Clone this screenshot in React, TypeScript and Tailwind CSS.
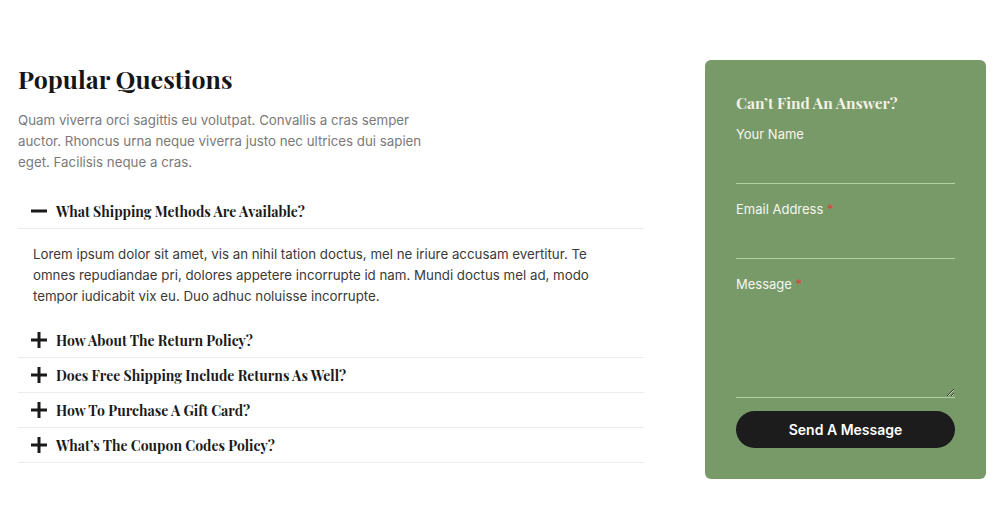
import { useState } from "react";

const serif = "font-['Playfair_Display','DejaVu_Serif',serif]";
const sans = "font-['Inter','Liberation_Sans',sans-serif]";

const faqs = [
  {
    q: "What Shipping Methods Are Available?",
    a: "Lorem ipsum dolor sit amet, vis an nihil tation doctus, mel ne iriure accusam evertitur. Te omnes repudiandae pri, dolores appetere incorrupte id nam. Mundi doctus mel ad, modo tempor iudicabit vix eu. Duo adhuc noluisse incorrupte.",
  },
  { q: "How About The Return Policy?", a: "" },
  { q: "Does Free Shipping Include Returns As Well?", a: "" },
  { q: "How To Purchase A Gift Card?", a: "" },
  { q: "What\u2019s The Coupon Codes Policy?", a: "" },
];

const Icon = ({ open }: { open: boolean }) => (
  <svg width="16" height="16" viewBox="0 0 16 16" className="shrink-0">
    <rect x="0" y="6.5" width="16" height="3" fill="#1a1a1a" />
    {!open && <rect x="6.5" y="0" width="3" height="16" fill="#1a1a1a" />}
  </svg>
);

export default function App() {
  const [open, setOpen] = useState(0);

  return (
    <div className={`flex min-h-[527px] bg-white pl-[18px] pr-[14px] pt-[60px] ${sans}`}>
      <div className="w-[626px]">
        <h2 className={`${serif} mt-[1px] text-[25px] leading-[36px] font-bold text-[#161616]`}>
          Popular Questions
        </h2>
        <p className="mt-[13px] w-[410px] text-[13.3px] leading-[21px] text-[#7a7a7a]">
          Quam viverra orci sagittis eu volutpat. Convallis a cras semper
          auctor. Rhoncus urna neque viverra justo nec ultrices dui sapien
          eget. Facilisis neque a cras.
        </p>

        <div className="mt-[21px]">
          {faqs.map((f, i) => (
            <div key={f.q}>
              <button
                onClick={() => setOpen(open === i ? -1 : i)}
                className="flex h-[35px] w-full items-center gap-[9px] border-b border-[#ececec] pl-[13px] text-left"
              >
                <Icon open={open === i} />
                <span className={`${serif} text-[14px] font-bold text-[#1a1a1a]`}>
                  {f.q}
                </span>
              </button>
              {open === i && f.a && (
                <p className="px-[15px] pt-[15px] pb-[16px] pr-[40px] text-[13.3px] leading-[21px] text-[#3a3a3a]">
                  {f.a}
                </p>
              )}
            </div>
          ))}
        </div>
      </div>

      <div className="ml-auto h-[419px] w-[281px] rounded-[6px] bg-[#789a69] px-[31px] pt-[33px]">
        <h3 className={`${serif} text-[15.5px] leading-[20px] font-bold text-[#f5f1e3]`}>
          Can{"\u2019"}t Find An Answer?
        </h3>

        <label className="mt-[12px] block text-[13px] leading-[18px] text-[#f7f5ec]">
          Your Name
        </label>
        <input
          type="text"
          className="block h-[41px] w-full border-b border-[#b5cfa6] bg-transparent outline-none"
        />

        <label className="mt-[16px] block text-[13px] leading-[18px] text-[#f7f5ec]">
          Email Address <span className="text-[#e0413a]">*</span>
        </label>
        <input
          type="email"
          className="block h-[41px] w-full border-b border-[#b5cfa6] bg-transparent outline-none"
        />

        <label className="mt-[16px] block text-[13px] leading-[18px] text-[#f7f5ec]">
          Message <span className="text-[#e0413a]">*</span>
        </label>
        <textarea className="block h-[105px] w-full border-b border-[#b5cfa6] bg-transparent outline-none" />

        <button className="mt-[13px] h-[37px] w-full rounded-full bg-[#1c1c1c] text-[14px] font-semibold text-white">
          Send A Message
        </button>
      </div>
    </div>
  );
}
